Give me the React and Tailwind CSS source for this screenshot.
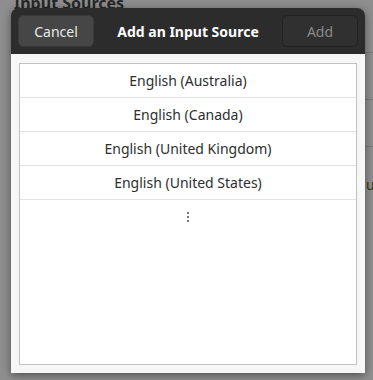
import React from 'react';

const sources = [
  'English (Australia)',
  'English (Canada)',
  'English (United Kingdom)',
  'English (United States)',
];

const font = { fontFamily: '"Noto Sans", "Open Sans", sans-serif' };

export default function App() {
  return (
    <div
      className="relative w-[373px] h-[380px] overflow-hidden bg-[#8e8e8e]"
      style={font}
    >
      {/* dimmed window behind the dialog */}
      <div className="absolute left-[14px] top-[-9px] text-[16px] font-bold text-[#262626]">
        Input Sources
      </div>
      <div className="absolute left-[365px] top-[52px] w-[8px] h-px bg-[#7a7a7a]" />
      <div className="absolute left-[365px] top-[99px] w-[8px] h-px bg-[#7a7a7a]" />
      <div className="absolute left-[365px] top-[146px] w-[8px] h-px bg-[#7a7a7a]" />
      <div className="absolute left-[366px] top-[174px] text-[14px] text-[#3a3320]">u</div>

      <div className="relative ml-[11px] mt-[8px] w-[354px] h-[365px] flex flex-col rounded-t-[8px] shadow-[0_2px_8px_rgba(0,0,0,0.45)]">
        <div className="h-[46px] shrink-0 flex items-center justify-between px-[7px] bg-[#2c2c2c] rounded-t-[8px]">
          <button className="w-[76px] h-[32px] rounded-[5px] bg-[#464646] border border-[#3a3a3a] text-[14px] text-[#e8e8e8]">
            Cancel
          </button>
          <div className="text-[14px] font-bold text-white">Add an Input Source</div>
          <button className="w-[76px] h-[32px] rounded-[5px] bg-[#303030] border border-[#222222] text-[14px] text-[#8a8a8a]">
            Add
          </button>
        </div>
        <div className="flex-1 bg-[#f6f6f6] pt-[9px] px-[8px] pb-[8px] flex">
          <div className="flex-1 bg-white border border-[#c2c2c2] flex flex-col">
            {sources.map((s) => (
              <div
                key={s}
                className="h-[34px] flex items-center justify-center border-b border-[#e3e3e3] text-[14px] text-[#2e2e2e]"
              >
                {s}
              </div>
            ))}
            <div className="h-[34px] flex items-center justify-center">
              <div className="flex flex-col gap-[2px]">
                <span className="w-[2px] h-[2px] bg-[#777]" />
                <span className="w-[2px] h-[2px] bg-[#777]" />
                <span className="w-[2px] h-[2px] bg-[#777]" />
              </div>
            </div>
          </div>
        </div>
      </div>
    </div>
  );
}
